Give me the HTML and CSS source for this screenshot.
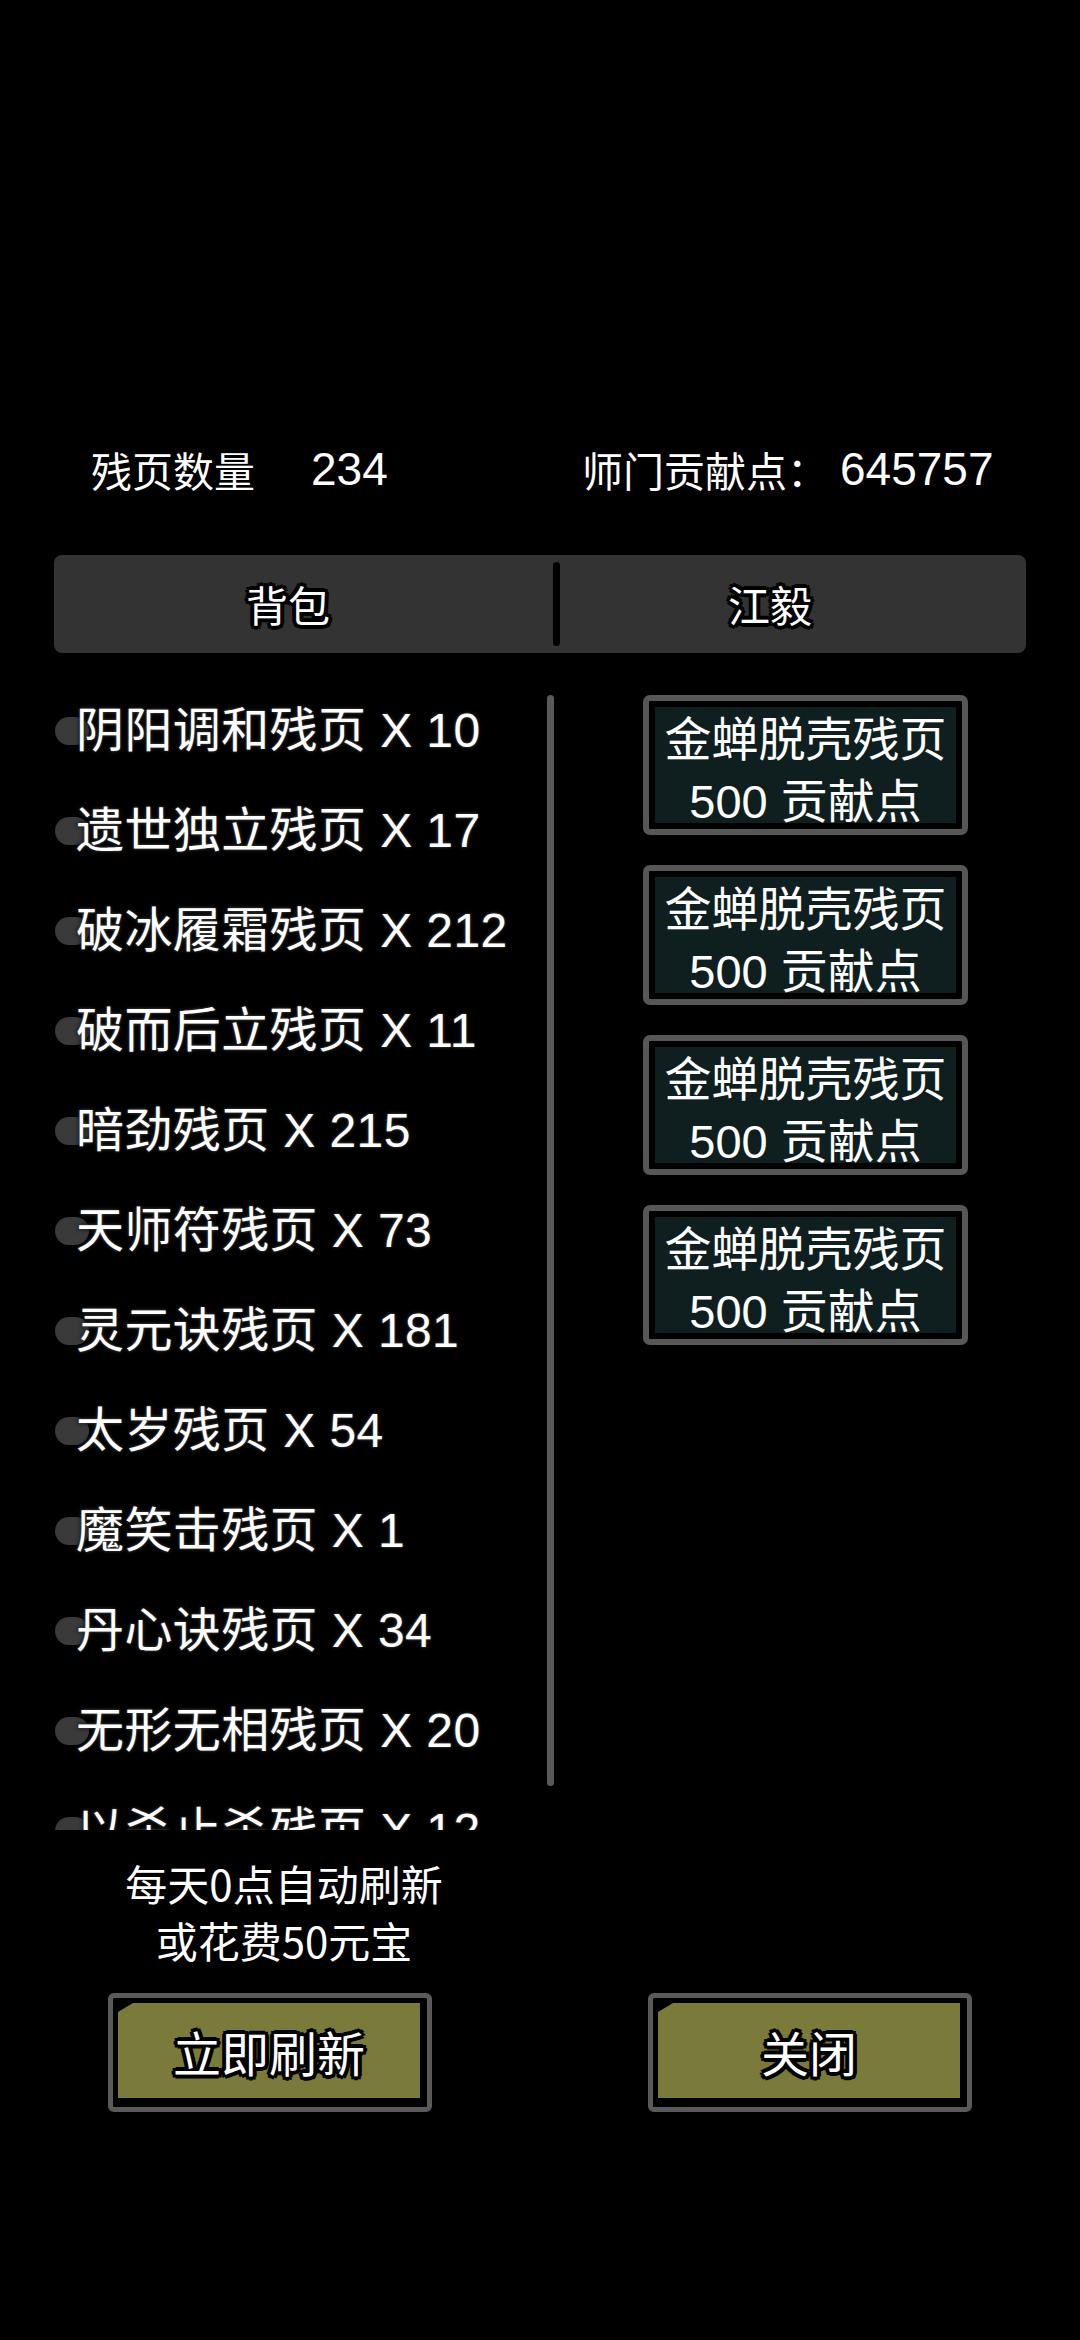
FILE: index.html
```html
<!DOCTYPE html>
<html lang="zh-CN">
<head>
<meta charset="utf-8">
<title>残页兑换</title>
<link rel="stylesheet" href="styles.css">
</head>
<body>
<div class="screen">
  <div class="stats">
    <div class="stat stat-left"><span class="stat-label">残页数量</span><span class="stat-value">234</span></div>
    <div class="stat stat-right"><span class="stat-label">师门贡献点：</span><span class="stat-value">645757</span></div>
  </div>

  <div class="tabs">
    <div class="tab tab-bag outlined">背包</div>
    <div class="tab-divider"></div>
    <div class="tab tab-npc outlined">江毅</div>
  </div>

  <div class="main">
    <div class="list-col">
      <div class="list">
        <div class="item"><span class="item-text">阴阳调和残页 X 10</span></div>
        <div class="item"><span class="item-text">遗世独立残页 X 17</span></div>
        <div class="item"><span class="item-text">破冰履霜残页 X 212</span></div>
        <div class="item"><span class="item-text">破而后立残页 X 11</span></div>
        <div class="item"><span class="item-text">暗劲残页 X 215</span></div>
        <div class="item"><span class="item-text">天师符残页 X 73</span></div>
        <div class="item"><span class="item-text">灵元诀残页 X 181</span></div>
        <div class="item"><span class="item-text">太岁残页 X 54</span></div>
        <div class="item"><span class="item-text">魔笑击残页 X 1</span></div>
        <div class="item"><span class="item-text">丹心诀残页 X 34</span></div>
        <div class="item"><span class="item-text">无形无相残页 X 20</span></div>
        <div class="item"><span class="item-text">以杀止杀残页 X 12</span></div>
      </div>
      <div class="scrollbar"></div>
    </div>

    <div class="shop">
      <div class="card"><div class="card-line">金蝉脱壳残页</div><div class="card-line">500 贡献点</div></div>
      <div class="card"><div class="card-line">金蝉脱壳残页</div><div class="card-line">500 贡献点</div></div>
      <div class="card"><div class="card-line">金蝉脱壳残页</div><div class="card-line">500 贡献点</div></div>
      <div class="card"><div class="card-line">金蝉脱壳残页</div><div class="card-line">500 贡献点</div></div>
    </div>
  </div>

  <div class="note">每天0点自动刷新<br>或花费50元宝</div>

  <div class="actions">
    <div class="btn-cell"><div class="btn"><div class="btn-face outlined">立即刷新</div></div></div>
    <div class="btn-cell"><div class="btn"><div class="btn-face outlined">关闭</div></div></div>
  </div>
</div>
</body>
</html>
```

FILE: styles.css
```css
html, body {
  margin: 0;
  padding: 0;
  background: #000;
}

body {
  font-family: "Noto Sans CJK SC", "Noto Sans", sans-serif;
  color: #fff;
}

.screen {
  width: 1080px;
  height: 2340px;
  overflow: hidden;
  box-sizing: border-box;
  padding-top: 441px;
}

/* header stats */
.stats {
  display: flex;
  align-items: center;
  height: 56px;
  font-size: 41px;
  line-height: 56px;
  padding-left: 91px;
}

.stat {
  display: flex;
  align-items: center;
  white-space: nowrap;
}

.stat-value {
  font-family: "Liberation Sans", "Noto Sans CJK SC", sans-serif;
  font-size: 46px;
}

.stat-left {
  width: 491px;
}

.stat-left .stat-value {
  margin-left: 56px;
}

.stat-right .stat-value {
  margin-left: 12px;
}

/* tabs */
.tabs {
  display: flex;
  align-items: center;
  margin: 58px 54px 0;
  height: 98px;
  background: #333333;
  border-radius: 8px;
}

.tab {
  font-size: 42px;
  line-height: 56px;
  text-align: center;
}

.tab-bag {
  width: 468px;
}

.tab-divider {
  width: 7px;
  height: 84px;
  margin-left: 31px;
  background: #000;
  border-radius: 4px;
}

.tab-npc {
  width: 420px;
}

.outlined {
  text-shadow:
    -3px -3px 0 #000, 0 -3px 0 #000, 3px -3px 0 #000,
    -3px 0 0 #000, 3px 0 0 #000,
    -3px 3px 0 #000, 0 3px 0 #000, 3px 3px 0 #000,
    -4px 0 0 #000, 4px 0 0 #000, 0 -4px 0 #000, 0 4px 0 #000;
}

/* main area */
.main {
  display: flex;
  margin-top: 28px;
  height: 1149px;
}

.list-col {
  display: flex;
  margin-left: 54px;
}

.list {
  width: 493px;
  height: 1149px;
  overflow: hidden;
}

.item {
  position: relative;
  display: flex;
  align-items: center;
  height: 100px;
  padding-left: 22px;
  font-family: "Liberation Sans", "Noto Sans CJK SC", sans-serif;
  font-size: 48px;
  line-height: 60px;
  letter-spacing: 0.4px;
  white-space: nowrap;
}

.item::before {
  content: "";
  position: absolute;
  left: 1px;
  top: 36px;
  width: 34px;
  height: 28px;
  border-radius: 14px;
  background: #3a3a3a;
}

.item-text {
  position: relative;
  text-shadow: 0 0 2px #4a4a4a, 0 0 4px #2e2e2e, 0 0 4px #000;
}

.scrollbar {
  width: 7px;
  height: 1091px;
  margin-top: 14px;
  background: #5a5a5a;
  border-radius: 4px;
}

/* shop cards */
.shop {
  display: flex;
  flex-direction: column;
  gap: 30px;
  margin-left: 89px;
  padding-top: 14px;
}

.card {
  width: 325px;
  height: 140px;
  box-sizing: border-box;
  border: 6px solid #575757;
  border-radius: 7px;
  background: #0f1f1f;
  box-shadow: inset 0 0 0 6px #000;
  padding-top: 8px;
  text-align: center;
  font-family: "Liberation Sans", "Noto Sans CJK SC", sans-serif;
  font-size: 47px;
  line-height: 62px;
  white-space: nowrap;
}

/* note */
.note {
  width: 568px;
  margin-top: 24px;
  text-align: center;
  font-size: 42px;
  line-height: 57px;
}

/* buttons */
.actions {
  display: grid;
  grid-template-columns: 540px 540px;
  margin-top: 25px;
}

.btn-cell {
  display: flex;
  justify-content: center;
}

.btn {
  width: 324px;
  height: 119px;
  box-sizing: border-box;
  border: 5px solid #5a5a5a;
  border-radius: 6px;
  background: #000;
  padding: 5px 7px 9px 5px;
}

.btn-face {
  height: 100%;
  background: #7a7a3b;
  clip-path: polygon(15px 0, 100% 0, 100% 100%, 0 100%, 0 9px);
  display: flex;
  align-items: center;
  justify-content: center;
  font-size: 48px;
  line-height: 60px;
}
```
